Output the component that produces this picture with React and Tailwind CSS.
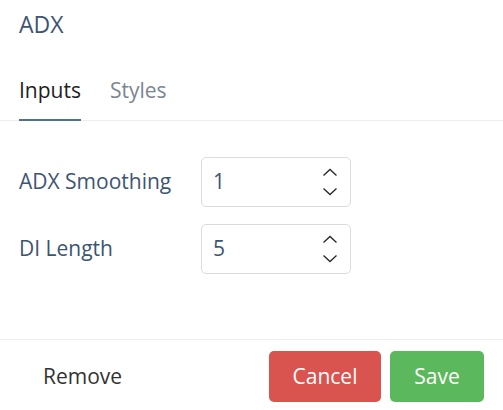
const Spinner = () => (
  <div className="flex flex-col gap-[10px] pr-[12px]">
    <svg width="16" height="9" viewBox="0 0 16 9" fill="none" stroke="#2b2b2b" strokeWidth="1.4">
      <path d="M1.5 7.5 L8 1.5 L14.5 7.5" />
    </svg>
    <svg width="16" height="9" viewBox="0 0 16 9" fill="none" stroke="#2b2b2b" strokeWidth="1.4">
      <path d="M1.5 1.5 L8 7.5 L14.5 1.5" />
    </svg>
  </div>
);

const NumberRow = ({ label, value }) => (
  <div className="flex items-center h-[50px]">
    <div className="w-[182px] text-[21px] text-[#3d5573]">{label}</div>
    <div className="w-[150px] h-[50px] border border-[#d9dcdf] rounded-[5px] flex items-center justify-between pl-[11px]">
      <span className="text-[21px] text-[#3d5573]">{value}</span>
      <Spinner />
    </div>
  </div>
);

const App = () => {
  return (
    <div
      className="w-[503px] h-[410px] bg-white flex flex-col"
      style={{ fontFamily: "'Open Sans', 'Noto Sans', sans-serif" }}
    >
      {/* header */}
      <div className="px-[19px] pt-[7px] h-[54px] text-[23px] text-[#3d5573]">ADX</div>
      {/* tabs */}
      <div className="flex gap-[29px] px-[19px] border-b border-[#eceef0] h-[67px]">
        <div className="flex flex-col justify-between pt-[22px]">
          <span className="text-[21px] leading-[28px] text-[#1e1e1e]">Inputs</span>
          <div className="h-[2px] bg-[#4d7190] mb-[-1px]" />
        </div>
        <div className="pt-[22px] text-[21px] leading-[28px] text-[#7b8591]">Styles</div>
      </div>
      {/* body */}
      <div className="flex flex-col gap-[17px] px-[19px] pt-[36px] h-[219px] border-b border-[#eceef0]">
        <NumberRow label="ADX Smoothing" value="1" />
        <NumberRow label="DI Length" value="5" />
      </div>
      {/* footer */}
      <div className="flex items-center justify-between pl-[43px] pr-[19px] pt-[11px]">
        <span className="text-[21px] text-[#333]">Remove</span>
        <div className="flex gap-[9px]">
          <button className="w-[112px] h-[51px] rounded-[5px] bg-[#d9534f] text-white text-[21px]">Cancel</button>
          <button className="w-[94px] h-[51px] rounded-[5px] bg-[#5cb85c] text-white text-[21px]">Save</button>
        </div>
      </div>
    </div>
  );
};

export default App;
